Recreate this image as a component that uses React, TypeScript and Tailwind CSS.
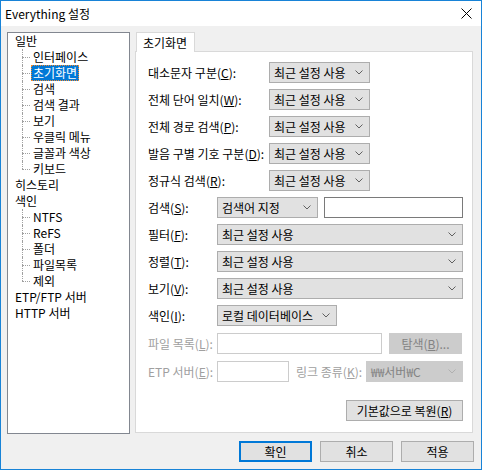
import React from "react";

function Chevron({ color = "#606060" }: { color?: string }) {
  return (
    <svg width="8" height="5" viewBox="0 0 8 5" className="shrink-0">
      <path d="M0.5 0.5 L4 4 L7.5 0.5" fill="none" stroke={color} strokeWidth="1" />
    </svg>
  );
}

function Combo({ cls, text, disabled }: { cls: string; text: React.ReactNode; disabled?: boolean }) {
  return (
    <div
      className={`flex items-center justify-between h-[21px] border pl-[4px] pr-[6px] ${cls} ${
        disabled ? "border-[#cccccc] bg-[#cccccc] text-[#838383]" : "border-[#adadad] bg-[#e1e1e1] text-black"
      }`}
    >
      <span className="leading-[16px] whitespace-nowrap">{text}</span>
      <Chevron color={disabled ? "#b0b0b0" : "#606060"} />
    </div>
  );
}

function Root({ label }: { label: string }) {
  return (
    <div className="flex h-[16px]">
      <div className="w-[5px]" />
      <span className="px-[2px] leading-[16px] whitespace-nowrap">{label}</span>
    </div>
  );
}

function Child({ label, last, selected }: { label: string; last?: boolean; selected?: boolean }) {
  return (
    <div className="flex h-[16px]">
      <div className="w-[14px]" />
      <div className="relative w-[9px] h-full">
        <div
          className={`absolute left-0 top-0 border-l border-dotted border-[#a0a0a0] ${last ? "h-[8px]" : "h-full"}`}
        />
        <div className="absolute left-0 top-[8px] w-[8px] border-t border-dotted border-[#a0a0a0]" />
      </div>
      <span
        className={`px-[2px] leading-[16px] whitespace-nowrap ${
          selected ? "bg-[#0078d7] text-white outline outline-1 outline-dotted outline-[#f08a30] -outline-offset-1" : ""
        }`}
      >
        {label}
      </span>
    </div>
  );
}

function Label({ cls, children, disabled }: { cls: string; children: React.ReactNode; disabled?: boolean }) {
  return (
    <div className={`${cls} shrink-0 leading-[16px] whitespace-nowrap ${disabled ? "text-[#a0a0a0]" : "text-black"}`}>
      {children}
    </div>
  );
}

function Btn({ cls, children, def, disabled }: { cls: string; children: React.ReactNode; def?: boolean; disabled?: boolean }) {
  return (
    <div
      className={`flex items-center justify-center h-[21px] ${cls} ${
        def
          ? "border-2 border-[#0078d7] bg-[#e1e1e1]"
          : disabled
          ? "border border-[#cccccc] bg-[#cccccc] text-[#838383]"
          : "border border-[#adadad] bg-[#e1e1e1]"
      }`}
    >
      <span className="leading-[16px] whitespace-nowrap">{children}</span>
    </div>
  );
}

export default function App() {
  return (
    <div className="w-[482px] h-[470px] border border-[#1883d7] bg-[#f0f0f0] flex flex-col text-[12px] text-black font-['Noto_Sans_CJK_KR',sans-serif] overflow-hidden">
      {/* Title bar */}
      <div className="h-[25px] bg-white flex items-center justify-between shrink-0">
        <span className="pl-[4px] leading-[16px] text-[12px]">Everything 설정</span>
        <svg width="11" height="11" viewBox="0 0 11 11" className="mr-[9px]">
          <path d="M0.5 0.5 L10.5 10.5 M10.5 0.5 L0.5 10.5" stroke="#000" strokeWidth="1" />
        </svg>
      </div>

      {/* Body */}
      <div className="flex pt-[6px] pl-[6px]">
        {/* Tree */}
        <div className="w-[123px] h-[402px] border border-[#828790] bg-white flex flex-col shrink-0">
          <Root label="일반" />
          <Child label="인터페이스" />
          <Child label="초기화면" selected />
          <Child label="검색" />
          <Child label="검색 결과" />
          <Child label="보기" />
          <Child label="우클릭 메뉴" />
          <Child label="글꼴과 색상" />
          <Child label="키보드" last />
          <Root label="히스토리" />
          <Root label="색인" />
          <Child label="NTFS" />
          <Child label="ReFS" />
          <Child label="폴더" />
          <Child label="파일목록" />
          <Child label="제외" last />
          <Root label="ETP/FTP 서버" />
          <Root label="HTTP 서버" />
        </div>

        {/* Right column */}
        <div className="ml-[5px] w-[339px] flex flex-col">
          <div className="w-[338px] h-[401px] flex flex-col">
            <div className="ml-[1px] w-[59px] h-[20px] -mb-px border-t border-l border-r border-[#d9d9d9] bg-white flex items-center pl-[6px] relative z-10">
              <span className="leading-[16px]">초기화면</span>
            </div>
            <div className="flex-1 border border-[#d9d9d9] bg-white flex flex-col pt-[10px] pl-[12px]">
              <div className="flex flex-col gap-[6px]">
                <div className="flex items-center h-[21px]">
                  <Label cls="w-[121px]">
                    대소문자 구분(<u>C</u>):
                  </Label>
                  <Combo cls="w-[101px]" text="최근 설정 사용" />
                </div>
                <div className="flex items-center h-[21px]">
                  <Label cls="w-[121px]">
                    전체 단어 일치(<u>W</u>):
                  </Label>
                  <Combo cls="w-[101px]" text="최근 설정 사용" />
                </div>
                <div className="flex items-center h-[21px]">
                  <Label cls="w-[121px]">
                    전체 경로 검색(<u>P</u>):
                  </Label>
                  <Combo cls="w-[101px]" text="최근 설정 사용" />
                </div>
                <div className="flex items-center h-[21px]">
                  <Label cls="w-[121px]">
                    발음 구별 기호 구분(<u>D</u>):
                  </Label>
                  <Combo cls="w-[101px]" text="최근 설정 사용" />
                </div>
                <div className="flex items-center h-[21px]">
                  <Label cls="w-[121px]">
                    정규식 검색(<u>R</u>):
                  </Label>
                  <Combo cls="w-[101px]" text="최근 설정 사용" />
                </div>
                <div className="flex items-center h-[21px]">
                  <Label cls="w-[69px]">
                    검색(<u>S</u>):
                  </Label>
                  <Combo cls="w-[101px]" text="검색어 지정" />
                  <div className="ml-[6px] w-[139px] h-[21px] border border-[#7a7a7a] bg-white" />
                </div>
                <div className="flex items-center h-[21px]">
                  <Label cls="w-[69px]">
                    필터(<u>F</u>):
                  </Label>
                  <Combo cls="w-[246px]" text="최근 설정 사용" />
                </div>
                <div className="flex items-center h-[21px]">
                  <Label cls="w-[69px]">
                    정렬(<u>T</u>):
                  </Label>
                  <Combo cls="w-[246px]" text="최근 설정 사용" />
                </div>
                <div className="flex items-center h-[21px]">
                  <Label cls="w-[69px]">
                    보기(<u>V</u>):
                  </Label>
                  <Combo cls="w-[246px]" text="최근 설정 사용" />
                </div>
                <div className="flex items-center h-[21px]">
                  <Label cls="w-[69px]">
                    색인(<u>I</u>):
                  </Label>
                  <Combo cls="w-[120px]" text="로컬 데이터베이스" />
                </div>
                <div className="flex items-center h-[21px] mt-[1px]">
                  <Label cls="w-[69px]" disabled>
                    파일 목록(<u>L</u>):
                  </Label>
                  <div className="w-[165px] h-[21px] border border-[#cccccc] bg-white" />
                  <Btn cls="ml-[7px] w-[73px]" disabled>
                    탐색(<u>B</u>)...
                  </Btn>
                </div>
                <div className="flex items-center h-[21px] mt-[1px]">
                  <Label cls="w-[69px]" disabled>
                    ETP 서버(<u>E</u>):
                  </Label>
                  <div className="w-[72px] h-[21px] border border-[#cccccc] bg-white" />
                  <Label cls="ml-[7px] w-[70px]" disabled>
                    링크 종류(<u>K</u>):
                  </Label>
                  <Combo cls="w-[97px]" text="₩₩서버₩C" disabled />
                </div>
              </div>
              <div className="flex justify-end mt-[18px] pr-[9px]">
                <Btn cls="w-[117px]">
                  기본값으로 복원(<u>R</u>)
                </Btn>
              </div>
            </div>
          </div>
          <div className="flex justify-end gap-[8px] mt-[8px]">
            <Btn cls="w-[73px]" def>
              확인
            </Btn>
            <Btn cls="w-[73px]">취소</Btn>
            <Btn cls="w-[73px]">적용</Btn>
          </div>
        </div>
      </div>
    </div>
  );
}
